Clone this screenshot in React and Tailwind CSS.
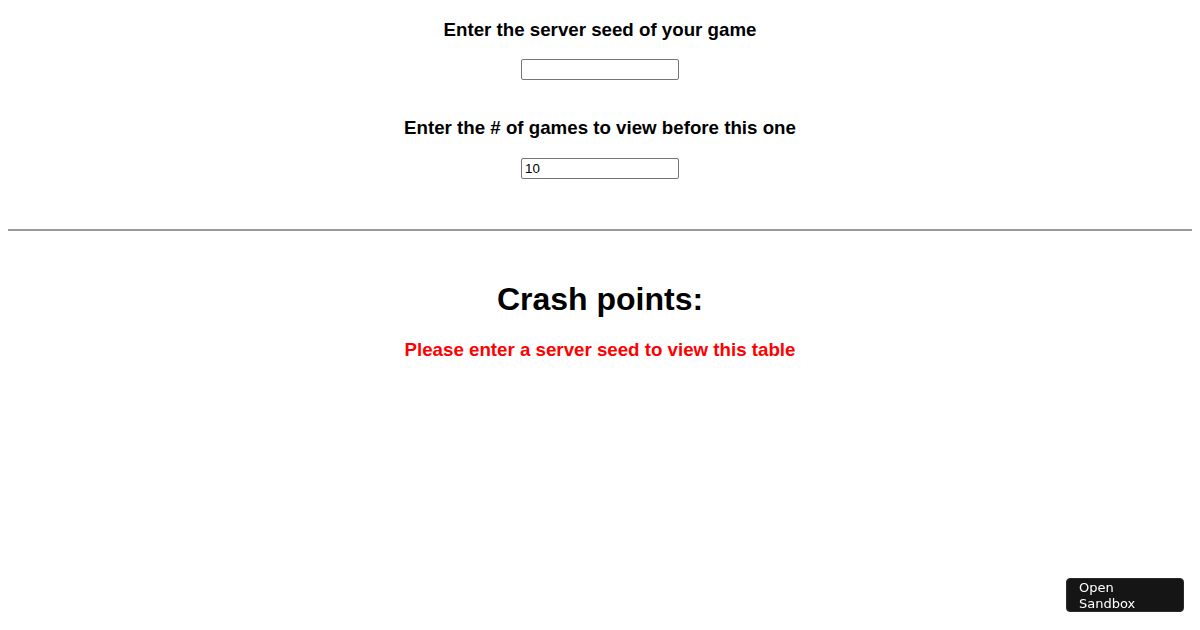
import React from 'react';

const App = () => {
  return (
    <div className="min-h-[630px] bg-white text-black font-['Liberation_Sans',Arial,sans-serif]">
      <div className="px-2 text-center">
        <h3 className="pt-[19px] text-[18.72px] font-bold leading-[21.5px]">Enter the server seed of your game</h3>
        <div className="mt-[18.5px] flex justify-center">
          <input
            type="text"
            className="w-[158px] h-[21px] border border-[#767676] rounded-[2px] px-[3px] text-[13.33px] outline-none"
          />
        </div>
        <h3 className="mt-[37px] text-[18.72px] font-bold leading-[21.5px]">Enter the # of games to view before this one</h3>
        <div className="mt-[19.5px] flex justify-center">
          <input
            type="text"
            defaultValue="10"
            className="w-[158px] h-[21px] border border-[#767676] rounded-[2px] px-[3px] text-[13.33px] outline-none"
          />
        </div>
        <hr className="mt-[50px] border-t-2 border-[#9a9a9a]" />
        <h1 className="mt-[50px] text-[32px] font-bold leading-[37px]">Crash points:</h1>
        <h3 className="mt-[20.5px] text-[18.72px] font-bold leading-[21.5px] text-[#ff0000]">
          Please enter a server seed to view this table
        </h3>
      </div>

      {/* sandbox badge */}
      <button className="fixed left-[1066px] top-[578px] w-[118px] h-[34px] rounded-[4px] bg-[#151515] border border-[#2a2a2a] pl-[12px] pt-[1px] text-left text-[13px] leading-[16px] text-white font-['DejaVu_Sans',sans-serif]">
        Open
        <br />
        Sandbox
      </button>
    </div>
  );
};

export default App;
